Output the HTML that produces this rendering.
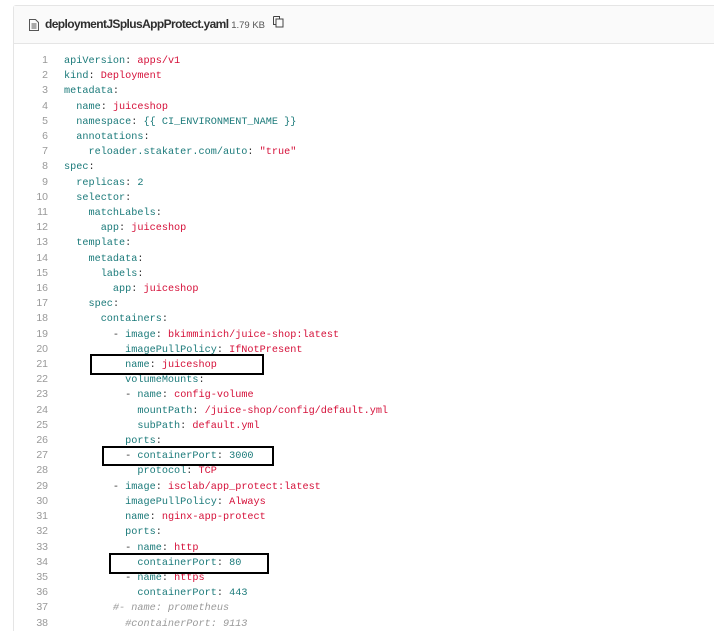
<!DOCTYPE html>
<html><head><style>
html,body{margin:0;overflow:hidden}
body{background:#fff;width:714px;height:631px;font-family:"Liberation Sans",sans-serif}
.wrap{position:relative;width:714px;height:631px;overflow:hidden}
.box{position:absolute;left:13px;top:5px;width:700px;height:626px;border:1px solid #e5e5e5;border-bottom:none;border-right:none;border-radius:3px 0 0 0}
.hdr{position:absolute;left:0;top:0;right:0;height:37px;background:#fafafa;border-bottom:1px solid #e5e5e5}
.fn{position:absolute;left:31px;top:11px;font-size:12px;font-weight:bold;color:#2e2e2e;letter-spacing:-0.6px;white-space:nowrap}
.sz{font-size:9.5px;font-weight:normal;color:#555;letter-spacing:0}
pre{position:absolute;margin:0;top:54px;font-family:"Liberation Mono",monospace;font-size:10.2px;line-height:15.2px}
.ln{left:18px;width:30px;text-align:right;color:#999;font-family:"Liberation Sans",sans-serif;font-size:10.5px;top:53px}
.code{left:64px;color:#333}
.k{color:#1b7a7a}.s{color:#d51039}.n{color:#1b7a7a}.c{color:#999;font-style:italic}
.r{position:absolute;border:2px solid #000}
</style></head><body><div class="wrap">
<div class="box"><div class="hdr">
<svg style="position:absolute;left:15px;top:13px" width="10" height="12" viewBox="0 0 10 12"><path d="M0.5 0.5h6l3 3v8h-9z" fill="none" stroke="#555"/><path d="M2.5 5h5M2.5 7h5M2.5 9h5" stroke="#555"/></svg>
<div class="fn">deploymentJSplusAppProtect.yaml <span class="sz">1.79 KB</span></div>
<svg style="position:absolute;left:259px;top:10px" width="11" height="12" viewBox="0 0 11 12"><path d="M0.5 0.5h6v2M0.5 0.5v8h2" fill="none" stroke="#444"/><rect x="3" y="3" width="7" height="8" fill="none" stroke="#444"/></svg>
</div></div>
<pre class="ln">1
2
3
4
5
6
7
8
9
10
11
12
13
14
15
16
17
18
19
20
21
22
23
24
25
26
27
28
29
30
31
32
33
34
35
36
37
38</pre>
<pre class="code"><span class="k">apiVersion</span>: <span class="s">apps/v1</span>
<span class="k">kind</span>: <span class="s">Deployment</span>
<span class="k">metadata</span>:
  <span class="k">name</span>: <span class="s">juiceshop</span>
  <span class="k">namespace</span>: <span class="n">{{ CI_ENVIRONMENT_NAME }}</span>
  <span class="k">annotations</span>:
    <span class="k">reloader.stakater.com/auto</span>: <span class="s">"true"</span>
<span class="k">spec</span>:
  <span class="k">replicas</span>: <span class="n">2</span>
  <span class="k">selector</span>:
    <span class="k">matchLabels</span>:
      <span class="k">app</span>: <span class="s">juiceshop</span>
  <span class="k">template</span>:
    <span class="k">metadata</span>:
      <span class="k">labels</span>:
        <span class="k">app</span>: <span class="s">juiceshop</span>
    <span class="k">spec</span>:
      <span class="k">containers</span>:
        - <span class="k">image</span>: <span class="s">bkimminich/juice-shop:latest</span>
          <span class="k">imagePullPolicy</span>: <span class="s">IfNotPresent</span>
          <span class="k">name</span>: <span class="s">juiceshop</span>
          <span class="k">volumeMounts</span>:
          - <span class="k">name</span>: <span class="s">config-volume</span>
            <span class="k">mountPath</span>: <span class="s">/juice-shop/config/default.yml</span>
            <span class="k">subPath</span>: <span class="s">default.yml</span>
          <span class="k">ports</span>:
          - <span class="k">containerPort</span>: <span class="n">3000</span>
            <span class="k">protocol</span>: <span class="s">TCP</span>
        - <span class="k">image</span>: <span class="s">isclab/app_protect:latest</span>
          <span class="k">imagePullPolicy</span>: <span class="s">Always</span>
          <span class="k">name</span>: <span class="s">nginx-app-protect</span>
          <span class="k">ports</span>:
          - <span class="k">name</span>: <span class="s">http</span>
            <span class="k">containerPort</span>: <span class="n">80</span>
          - <span class="k">name</span>: <span class="s">https</span>
            <span class="k">containerPort</span>: <span class="n">443</span>
        <span class="c">#- name: prometheus</span>
          <span class="c">#containerPort: 9113</span></pre>
<div class="r" style="left:90px;top:354px;width:170px;height:17px"></div>
<div class="r" style="left:102px;top:446px;width:168px;height:16px"></div>
<div class="r" style="left:109px;top:553px;width:156px;height:17px"></div>
</div></body></html>
